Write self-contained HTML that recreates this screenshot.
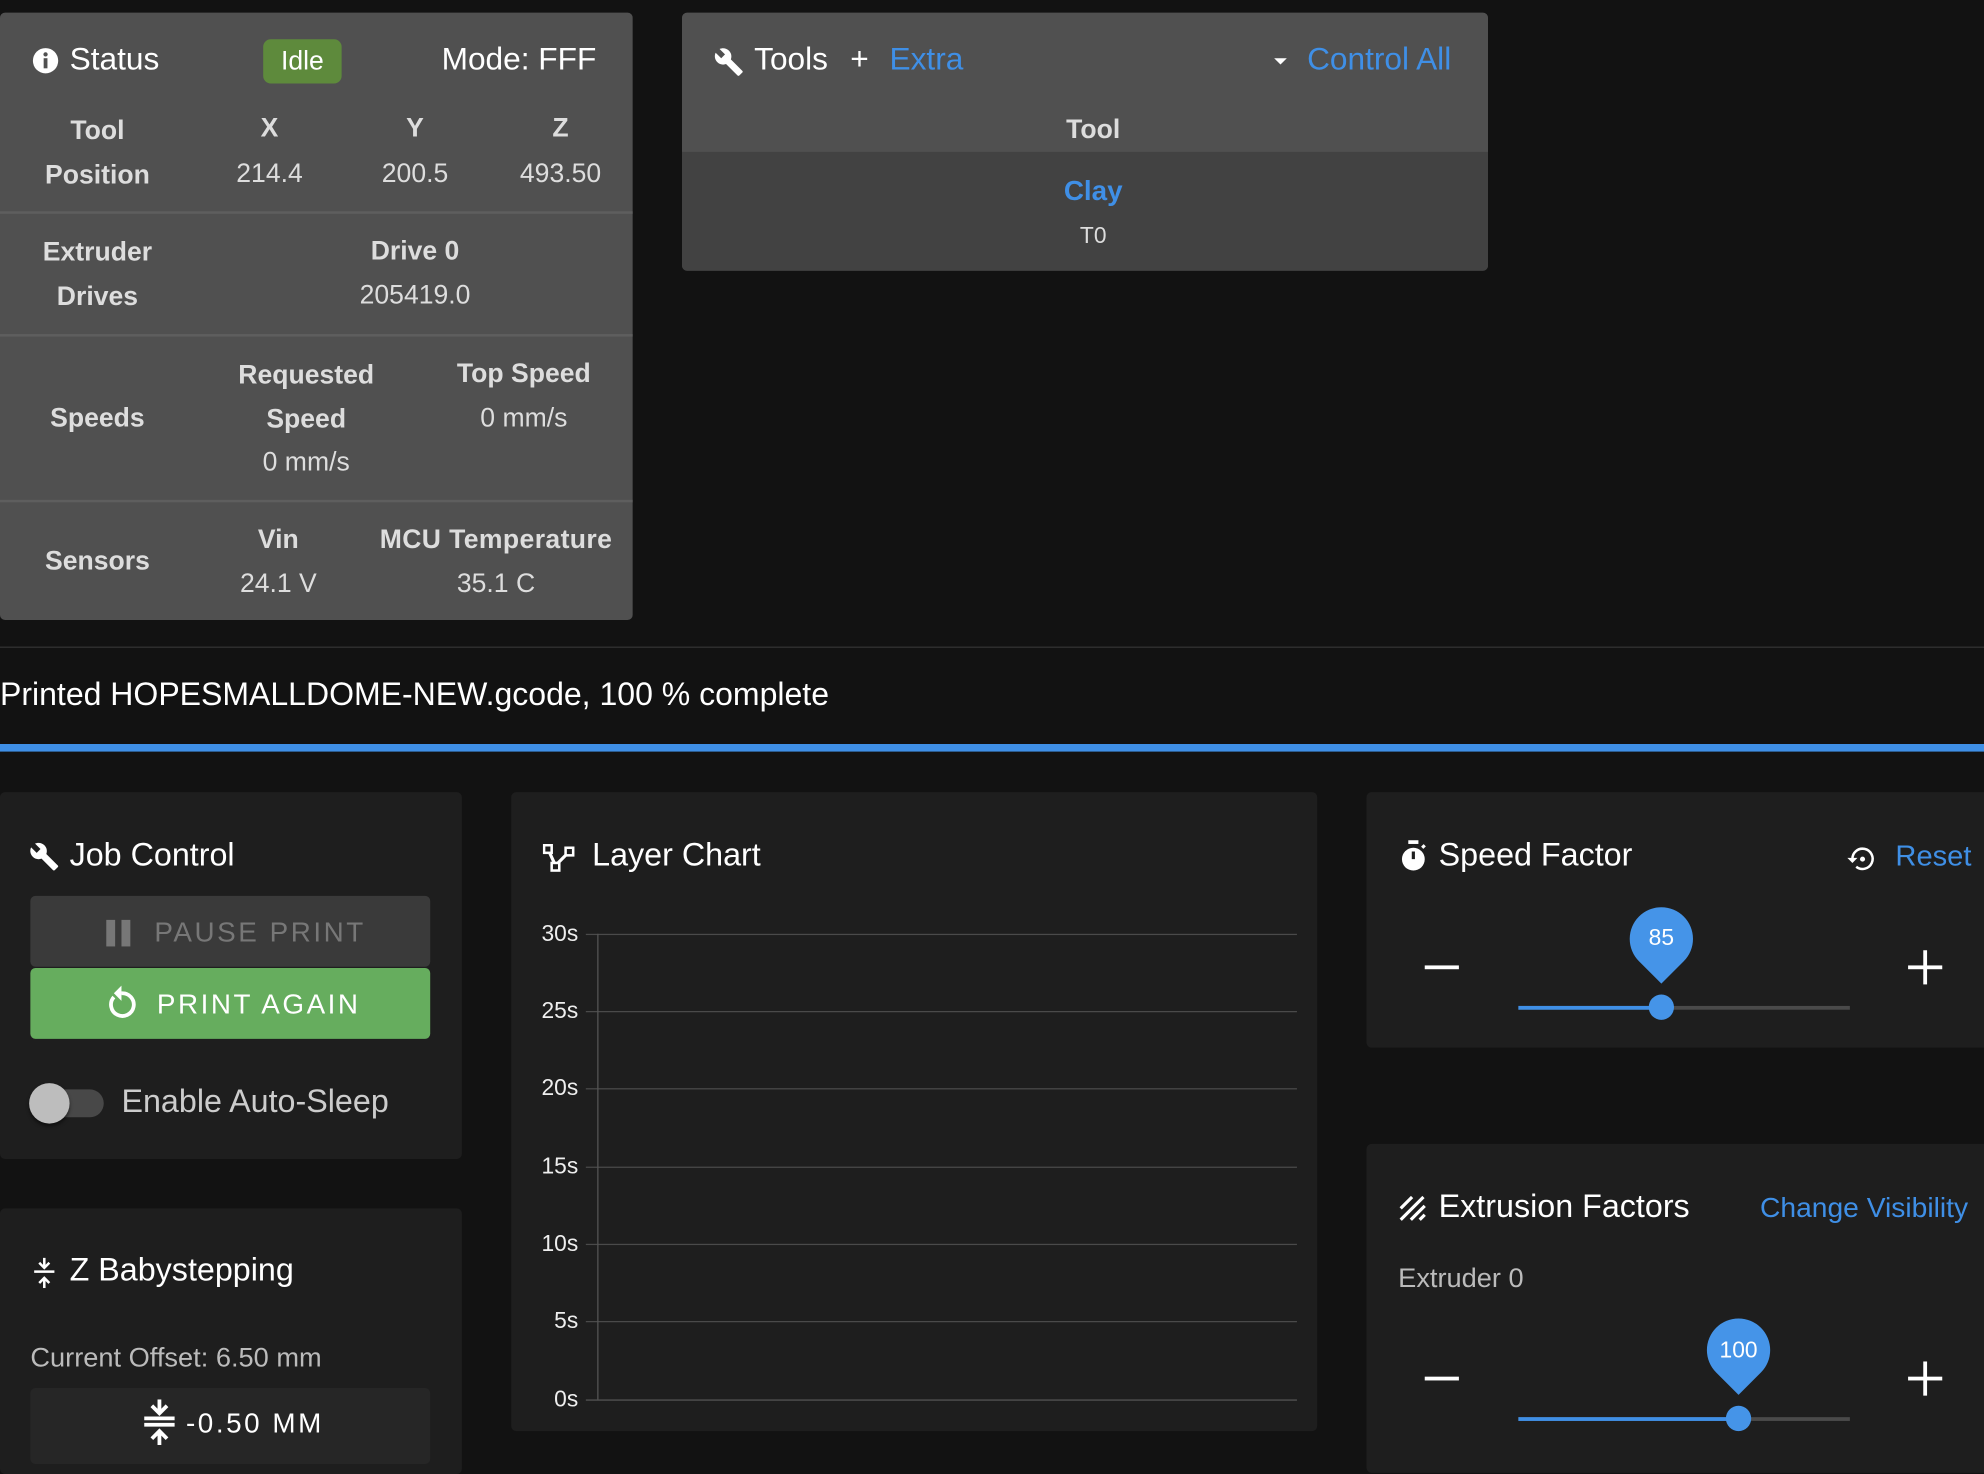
<!DOCTYPE html>
<html><head><meta charset="utf-8"><style>
html,body{margin:0;padding:0;background:#121212;width:1984px;height:1458px;overflow:hidden}
#w{position:absolute;left:0;top:0;width:1568px;height:1152px;transform:scale(1.26531);transform-origin:0 0;font-family:"Liberation Sans",sans-serif;color:#fff}
.a{position:absolute}
.c{position:absolute;text-align:center;transform:translateX(-50%);white-space:nowrap}
.card{position:absolute;border-radius:4px}
.b{font-weight:bold;color:#ddd}
.v{color:#ddd}
.blue{color:#3f8fe6}
.hl{position:absolute;left:0;width:500px;height:2px;background:#5e5e5e}
.grid{position:absolute;left:463px;width:562px;height:1px;background:#4a4a4a}
.yl{position:absolute;right:1111px;font-size:18px;color:#eee;transform:translateY(-50%)}
</style></head><body><div id="w">

<!-- Status card -->
<div class="card" style="left:0;top:10px;width:500px;height:480px;background:#505050"></div>
<svg class="a" style="left:25px;top:37px" width="22" height="22" viewBox="0 0 22 22"><circle cx="11" cy="11" r="10" fill="#fff"/><rect x="9.5" y="9" width="3" height="8" fill="#505050"/><circle cx="11" cy="6" r="1.7" fill="#505050"/></svg>
<div class="a" style="left:55px;top:33px;font-size:25px">Status</div>
<div class="a" style="left:208px;top:31px;width:62px;height:35px;background:#5e8a3c;border-radius:6px;font-size:21px;line-height:35px;text-align:center">Idle</div>
<div class="a" style="left:349px;top:33px;font-size:25px">Mode: FFF</div>
<div class="c b" style="left:77px;top:86px;font-size:21px;line-height:35px">Tool<br>Position</div>
<div class="c b" style="left:213px;top:90px;font-size:21px">X</div><div class="c v" style="left:213px;top:126px;font-size:21px">214.4</div>
<div class="c b" style="left:328px;top:90px;font-size:21px">Y</div><div class="c v" style="left:328px;top:126px;font-size:21px">200.5</div>
<div class="c b" style="left:443px;top:90px;font-size:21px">Z</div><div class="c v" style="left:443px;top:126px;font-size:21px">493.50</div>
<div class="hl" style="top:167px"></div>
<div class="c b" style="left:77px;top:182px;font-size:21px;line-height:35px">Extruder<br>Drives</div>
<div class="c b" style="left:328px;top:187px;font-size:21px">Drive 0</div><div class="c v" style="left:328px;top:222px;font-size:21px">205419.0</div>
<div class="hl" style="top:264px"></div>
<div class="c b" style="left:77px;top:319px;font-size:21px">Speeds</div>
<div class="c b" style="left:242px;top:279px;font-size:21px;line-height:35px">Requested<br>Speed</div>
<div class="c v" style="left:242px;top:354px;font-size:21px">0 mm/s</div>
<div class="c b" style="left:414px;top:284px;font-size:21px">Top Speed</div><div class="c v" style="left:414px;top:319px;font-size:21px">0 mm/s</div>
<div class="hl" style="top:395px"></div>
<div class="c b" style="left:77px;top:432px;font-size:21px">Sensors</div>
<div class="c b" style="left:220px;top:415px;font-size:21px">Vin</div><div class="c v" style="left:220px;top:450px;font-size:21px">24.1 V</div>
<div class="c b" style="left:392px;top:415px;font-size:21px;letter-spacing:0.3px">MCU Temperature</div><div class="c v" style="left:392px;top:450px;font-size:21px">35.1 C</div>

<!-- Tools card -->
<div class="card" style="left:539px;top:10px;width:637px;height:204px;background:#505050;overflow:hidden"><div class="a" style="left:0;top:110px;width:637px;height:94px;background:#424242"></div></div>
<svg class="a" style="left:564px;top:37px" width="24" height="24" viewBox="0 0 24 24"><path fill="#fff" d="M22.7 19l-9.1-9.1c.9-2.3.4-5-1.5-6.9-2-2-5-2.4-7.4-1.3L9 6 6 9 1.6 4.7C.4 7.1.9 10.1 2.9 12.1c1.9 1.9 4.6 2.4 6.9 1.5l9.1 9.1c.4.4 1 .4 1.4 0l2.3-2.3c.5-.4.5-1.1.1-1.4z"/></svg>
<div class="a" style="left:596px;top:33px;font-size:25px">Tools</div>
<div class="a" style="left:672px;top:33px;font-size:25px">+</div>
<div class="a blue" style="left:703px;top:33px;font-size:25px">Extra</div>
<div class="a" style="left:1007px;top:46px;width:0;height:0;border-left:5px solid transparent;border-right:5px solid transparent;border-top:5px solid #fff"></div>
<div class="a blue" style="left:1033px;top:33px;font-size:25px">Control All</div>
<div class="c b" style="left:864px;top:91px;font-size:21px">Tool</div>
<div class="c" style="left:864px;top:138px;font-size:22px;font-weight:bold;color:#3f8fe6">Clay</div>
<div class="c" style="left:864px;top:176px;font-size:18px;color:#ddd">T0</div>

<div class="a" style="left:0;top:511px;width:1568px;height:1px;background:#333"></div>
<div class="a" style="left:0;top:535px;font-size:25.3px">Printed HOPESMALLDOME-NEW.gcode, 100 % complete</div>
<div class="a" style="left:0;top:588px;width:1568px;height:6px;background:#3f8fe6"></div>

<!-- Job control -->
<div class="card" style="left:0;top:626px;width:365px;height:290px;background:#1e1e1e"></div>
<svg class="a" style="left:23px;top:665px" width="24" height="24" viewBox="0 0 24 24"><path fill="#fff" d="M22.7 19l-9.1-9.1c.9-2.3.4-5-1.5-6.9-2-2-5-2.4-7.4-1.3L9 6 6 9 1.6 4.7C.4 7.1.9 10.1 2.9 12.1c1.9 1.9 4.6 2.4 6.9 1.5l9.1 9.1c.4.4 1 .4 1.4 0l2.3-2.3c.5-.4.5-1.1.1-1.4z"/></svg>
<div class="a" style="left:55px;top:662px;font-size:25.5px">Job Control</div>
<div class="a" style="left:24px;top:708px;width:316px;height:56px;background:#3a3a3a;border-radius:4px"></div>
<div class="a" style="left:84px;top:727px;width:7px;height:21px;background:#777"></div><div class="a" style="left:96px;top:727px;width:7px;height:21px;background:#777"></div>
<div class="a" style="left:122px;top:724px;font-size:22px;letter-spacing:2px;color:#777">PAUSE PRINT</div>
<div class="a" style="left:24px;top:765px;width:316px;height:56px;background:#66ad5e;border-radius:4px"></div>
<svg class="a" style="left:82px;top:778px" width="28" height="30" viewBox="0 0 28 30"><path d="M8 10 A9 9 0 1 0 14 7" fill="none" stroke="#fff" stroke-width="3"/><path d="M14 1 L14 13 L8 7 Z" fill="#fff"/></svg>
<div class="a" style="left:124px;top:781px;font-size:22px;letter-spacing:2px">PRINT AGAIN</div>
<div class="a" style="left:24px;top:861px;width:58px;height:22px;border-radius:11px;background:#484848"></div>
<div class="a" style="left:23px;top:856px;width:32px;height:32px;border-radius:50%;background:#bdbdbd;box-shadow:0 2px 3px rgba(0,0,0,.5)"></div>
<div class="a" style="left:96px;top:857px;font-size:25.5px;color:#ccc">Enable Auto-Sleep</div>

<!-- Z baby -->
<div class="card" style="left:0;top:955px;width:365px;height:210px;background:#1e1e1e"></div>
<svg class="a" style="left:25px;top:994px" width="20" height="24" viewBox="0 0 20 24"><path d="M10 0v7M6 4l4 4 4-4M2 11h16M10 24v-7M6 20l4-4 4 4" stroke="#fff" stroke-width="2" fill="none"/></svg>
<div class="a" style="left:55px;top:990px;font-size:25.5px">Z Babystepping</div>
<div class="a" style="left:24px;top:1061px;font-size:21.5px;color:#bbb">Current Offset: 6.50 mm</div>
<div class="a" style="left:24px;top:1097px;width:316px;height:60px;background:#262626;border-radius:4px"></div>
<svg class="a" style="left:113px;top:1106px" width="26" height="36" viewBox="0 0 26 36"><path d="M13 0v10M7 5l6 6 6-6M1 15h24M1 20h24M13 36v-11M7 31l6-6 6 6" stroke="#fff" stroke-width="3" fill="none"/></svg>
<div class="a" style="left:147px;top:1112px;font-size:22px;letter-spacing:2px">-0.50 MM</div>

<!-- Layer chart -->
<div class="card" style="left:404px;top:626px;width:637px;height:505px;background:#1e1e1e"></div>
<svg class="a" style="left:429px;top:667px" width="26" height="24" viewBox="0 0 26 24"><path d="M4 4 L10 17 L21 6" stroke="#fff" stroke-width="2.5" fill="none"/><rect x="1" y="1" width="6" height="6" fill="#1e1e1e" stroke="#fff" stroke-width="2"/><rect x="7" y="15" width="6" height="6" fill="#1e1e1e" stroke="#fff" stroke-width="2"/><rect x="18" y="3" width="6" height="6" fill="#1e1e1e" stroke="#fff" stroke-width="2"/></svg>
<div class="a" style="left:468px;top:662px;font-size:25.5px">Layer Chart</div>
<div class="grid" style="top:738px"></div><div class="yl" style="top:738px">30s</div>
<div class="grid" style="top:799px"></div><div class="yl" style="top:799px">25s</div>
<div class="grid" style="top:860px"></div><div class="yl" style="top:860px">20s</div>
<div class="grid" style="top:922px"></div><div class="yl" style="top:922px">15s</div>
<div class="grid" style="top:983px"></div><div class="yl" style="top:983px">10s</div>
<div class="grid" style="top:1044px"></div><div class="yl" style="top:1044px">5s</div>
<div class="grid" style="top:1106px;background:#555"></div><div class="yl" style="top:1106px">0s</div>
<div class="a" style="left:472px;top:738px;width:1px;height:368px;background:#555"></div>

<!-- Speed factor -->
<div class="card" style="left:1080px;top:626px;width:500px;height:202px;background:#1e1e1e"></div>
<svg class="a" style="left:1105px;top:664px" width="24" height="26" viewBox="0 0 24 26"><rect x="8" y="0" width="8" height="3" fill="#fff"/><circle cx="12" cy="15" r="9" fill="#fff"/><path d="M12 15V9" stroke="#1e1e1e" stroke-width="2.5"/><path d="M19 6l2-2" stroke="#fff" stroke-width="2.5"/></svg>
<div class="a" style="left:1137px;top:662px;font-size:25.5px">Speed Factor</div>
<svg class="a" style="left:1460px;top:667px" width="24" height="24" viewBox="0 0 24 24"><path d="M4 12 A8 8 0 1 1 7 18" stroke="#fff" stroke-width="2" fill="none"/><path d="M0 11 L4 15 L8 11 Z" fill="#fff"/><circle cx="12" cy="12" r="2" fill="#fff"/></svg>
<div class="a blue" style="left:1498px;top:663px;font-size:23px">Reset</div>
<div class="a" style="left:1126px;top:763px;width:27px;height:3px;background:#fff"></div>
<div class="a" style="left:1508px;top:763px;width:27px;height:3px;background:#fff"></div><div class="a" style="left:1520px;top:751px;width:3px;height:27px;background:#fff"></div>
<div class="a" style="left:1200px;top:795px;width:262px;height:3px;background:#4a4a4a"></div>
<div class="a" style="left:1200px;top:795px;width:113px;height:3px;background:#3f8fe6"></div>
<div class="a" style="left:1303px;top:786px;width:20px;height:20px;border-radius:50%;background:#4594e8"></div>
<div class="a" style="left:1288px;top:717px;width:50px;height:50px;border-radius:50% 50% 0 50%;transform:rotate(45deg);background:#4594e8"></div>
<div class="c" style="left:1313px;top:731px;font-size:18px">85</div>

<!-- Extrusion -->
<div class="card" style="left:1080px;top:904px;width:500px;height:260px;background:#1e1e1e"></div>
<svg class="a" style="left:1106px;top:945px" width="22" height="20" viewBox="0 0 22 20"><path d="M1 10L10 1M1 19L19 1M9 19L20 8M16 19l4-4" stroke="#fff" stroke-width="2.5"/></svg>
<div class="a" style="left:1137px;top:940px;font-size:25.5px">Extrusion Factors</div>
<div class="a blue" style="left:1391px;top:942px;font-size:22.3px">Change Visibility</div>
<div class="a" style="left:1105px;top:998px;font-size:21.5px;color:#bbb">Extruder 0</div>
<div class="a" style="left:1126px;top:1088px;width:27px;height:3px;background:#fff"></div>
<div class="a" style="left:1508px;top:1088px;width:27px;height:3px;background:#fff"></div><div class="a" style="left:1520px;top:1076px;width:3px;height:27px;background:#fff"></div>
<div class="a" style="left:1200px;top:1120px;width:262px;height:3px;background:#4a4a4a"></div>
<div class="a" style="left:1200px;top:1120px;width:174px;height:3px;background:#3f8fe6"></div>
<div class="a" style="left:1364px;top:1111px;width:20px;height:20px;border-radius:50%;background:#4594e8"></div>
<div class="a" style="left:1349px;top:1042px;width:50px;height:50px;border-radius:50% 50% 0 50%;transform:rotate(45deg);background:#4594e8"></div>
<div class="c" style="left:1374px;top:1057px;font-size:18px">100</div>

</div></body></html>
